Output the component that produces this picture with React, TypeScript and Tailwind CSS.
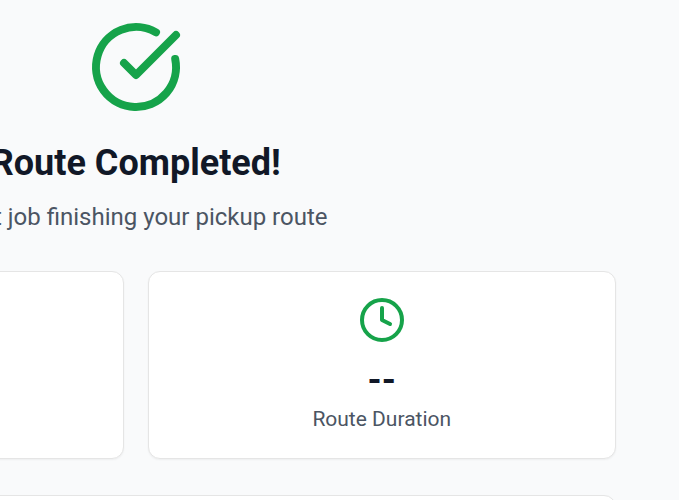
import { CircleCheckBig, Clock } from "lucide-react";

export default function App() {
  return (
    <div className="h-[500px] w-[679px] overflow-hidden bg-[#f9fafb] font-['Roboto',sans-serif]">
      <main className="-ml-[344.25px] w-[960px] pt-[19px]">
        <header className="flex flex-col items-center text-center">
          <CircleCheckBig className="size-24 text-[#16a34a]" strokeWidth={2} />
          <h1 className="mt-6 text-4xl leading-[48px] font-bold text-[#111827]">Route Completed!</h1>
          <p className="mt-3 text-2xl leading-9 text-[#4b5563]">Great job finishing your pickup route</p>
        </header>
        <section className="mt-9 grid grid-cols-2 gap-6">
          <div className="h-[188px] rounded-xl border border-[#e5e5e5] bg-white shadow-[0_1px_2px_rgba(0,0,0,0.05)]" />
          <div className="flex h-[188px] flex-col items-center rounded-xl border border-[#e5e5e5] bg-white pt-6 shadow-[0_1px_2px_rgba(0,0,0,0.05)]">
            <Clock className="size-12 text-[#16a34a]" />
            <div className="mt-[15px] text-4xl leading-[42px] font-bold text-[#111827]">--</div>
            <div className="mt-[3px] text-[21px] leading-[30px] text-[#4b5563]">Route Duration</div>
          </div>
        </section>
        <section className="mt-9 h-[188px] rounded-xl border border-[#e5e5e5] bg-white shadow-[0_1px_2px_rgba(0,0,0,0.05)]" />
      </main>
    </div>
  );
}
